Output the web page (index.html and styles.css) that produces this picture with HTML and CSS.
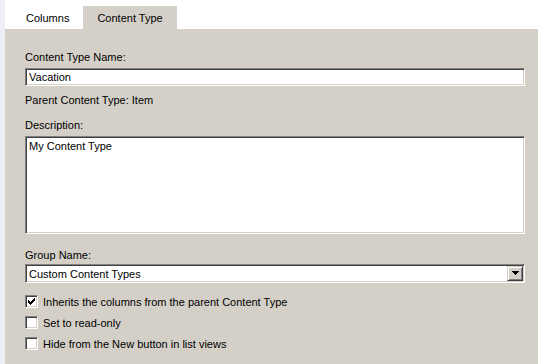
FILE: index.html
```html
<!DOCTYPE html>
<html lang="en">
<head>
    <meta charset="UTF-8">
    <title>Content Type</title>
    <link rel="stylesheet" href="styles.css">
</head>
<body>
    <div class="strip"></div>
    <div class="main">
        <div class="tabs">
            <div class="tab">Columns</div>
            <div class="tab tab-ativa">Content Type</div>
        </div>

        <div class="painel">
            <div class="rotulo">Content Type Name:</div>
            <input type="text" class="campo" value="Vacation">

            <div class="rotulo rotulo-pai">Parent Content Type: Item</div>

            <div class="rotulo rotulo-desc">Description:</div>
            <textarea class="campo area">My Content Type</textarea>

            <div class="rotulo rotulo-grupo">Group Name:</div>
            <div class="combo">
                <select class="campo combo-select">
                    <option>Custom Content Types</option>
                </select>
                <span class="combo-botao">
                    <svg width="7" height="5" viewBox="0 0 7 5"><path d="M0 0h7v1H0zM1 1h5v1H1zM2 2h3v1H2zM3 3h1v1H3z" fill="#000"/></svg>
                </span>
            </div>

            <div class="opcoes">
                <label class="opcao">
                    <span class="caixa">
                        <svg width="7" height="7" viewBox="0 0 7 7"><path d="M0 2h1v3H0zM1 3h1v3H1zM2 4h1v3H2zM3 3h1v3H3zM4 2h1v3H4zM5 1h1v3H5zM6 0h1v3H6z" fill="#000"/></svg>
                    </span>
                    Inherits the columns from the parent Content Type
                </label>
                <label class="opcao">
                    <span class="caixa"></span>
                    Set to read-only
                </label>
                <label class="opcao">
                    <span class="caixa"></span>
                    Hide from the New button in list views
                </label>
            </div>
        </div>
    </div>
</body>
</html>
```

FILE: styles.css
```css
* {
    margin: 0;
    padding: 0;
    box-sizing: border-box;
    font-family: 'Liberation Sans', Arial, sans-serif;
}

body {
    background: #fff;
    display: flex;
    height: 364px;
    overflow: hidden;
    font-size: 11px;
    color: #000;
}

.strip {
    width: 5px;
    background: #eeeef7;
}

.main {
    flex: 1;
    display: flex;
    flex-direction: column;
}

.tabs {
    height: 29px;
    display: flex;
    align-items: flex-end;
    padding-left: 7px;
}

.tab {
    height: 23px;
    line-height: 24px;
    padding: 0 14px;
}

.tab-ativa {
    background: #d4d0c8;
}

.painel {
    flex: 1;
    background: #d4d0c8;
    padding: 21px 13px 0 20px;
}

.rotulo {
    line-height: 14px;
}

.campo {
    display: block;
    width: 100%;
    height: 18px;
    margin-top: 4px;
    padding: 0 3px;
    font-size: 11px;
    color: #000;
    background: #fff;
    border-top: 1px solid #808080;
    border-left: 1px solid #808080;
    border-right: 1px solid #fff;
    border-bottom: 1px solid #fff;
    box-shadow: inset 1px 1px 0 #404040, inset -1px -1px 0 #d4d0c8;
    outline: none;
}

.rotulo-pai {
    margin-top: 7px;
}

.rotulo-desc {
    margin-top: 11px;
}

.area {
    height: 98px;
    padding: 3px 3px;
    resize: none;
    line-height: 13px;
}

.rotulo-grupo {
    margin-top: 14px;
}

.combo {
    position: relative;
    margin-top: 2px;
}

.combo-select {
    height: 19px;
    margin-top: 0;
    appearance: none;
    -webkit-appearance: none;
    border-radius: 0;
}

.combo-botao {
    position: absolute;
    right: 2px;
    top: 2px;
    width: 16px;
    height: 15px;
    background: #d4d0c8;
    border-top: 1px solid #d4d0c8;
    border-left: 1px solid #d4d0c8;
    border-right: 1px solid #404040;
    border-bottom: 1px solid #404040;
    box-shadow: inset 1px 1px 0 #fff, inset -1px -1px 0 #808080;
    display: flex;
    align-items: center;
    justify-content: center;
}

.opcoes {
    margin-top: 8px;
}

.opcao {
    display: flex;
    align-items: center;
    gap: 5px;
    height: 21px;
}

.caixa {
    width: 13px;
    height: 13px;
    background: #fff;
    border-top: 1px solid #808080;
    border-left: 1px solid #808080;
    border-right: 1px solid #fff;
    border-bottom: 1px solid #fff;
    box-shadow: inset 1px 1px 0 #404040, inset -1px -1px 0 #d4d0c8;
    display: flex;
    align-items: center;
    justify-content: center;
}
```
